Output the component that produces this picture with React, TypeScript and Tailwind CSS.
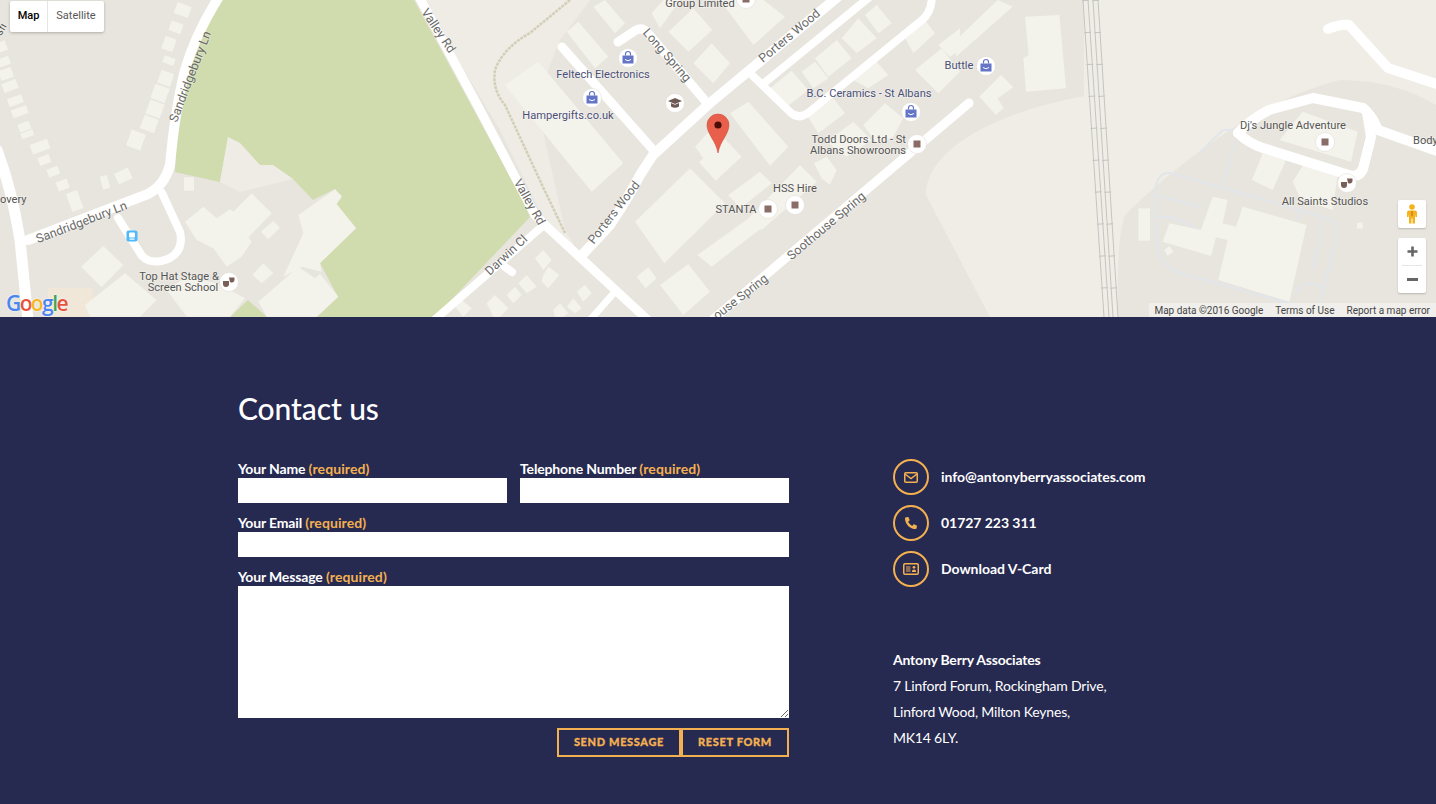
import { FaPhoneAlt } from "react-icons/fa";

// Footprints below were read off 3x crops, so they stay in crop coordinates.
// Each group gets shifted by its crop's x origin when drawn.
const blocksLeft = [
  [555,665,610,620,650,655,690,628,700,635,755,580,815,640,745,712,755,725,725,770,680,800,640,745,590,720],
  [895,645,1005,568,1025,590,1010,612,1068,685,960,790,965,815,905,800,850,830,910,700],
  [775,905,895,800,945,835,960,822,1015,890,950,950,800,950],
  [243,800,310,738,370,795,305,862],
  [255,915,375,820,470,900,420,950,270,950],
  [500,870,560,830,650,850,735,895,690,950,560,950],
  [783,695,820,663,840,683,805,718],
  [757,825,790,790,820,820,785,850],
  [1365,920,1385,900,1415,925,1390,950],
];

const blocksMid = [
  [340,20,375,0,435,70,405,100],
  [260,95,295,65,385,170,345,205],
  [75,255,175,185,430,490,335,575],
  [515,40,550,0,600,0,540,85],
  [565,95,640,25,697,90,625,155],
  [640,190,695,130,750,190,700,250],
  [720,0,850,0,915,50,820,135],
  [870,265,935,212,985,270,915,325],
  [965,215,1005,185,1045,235,1000,265],
  [1005,175,1070,120,1115,175,1045,230],
  [1085,115,1135,55,1190,115,1130,160],
  [1155,45,1190,15,1235,70,1195,100],
  [1265,95,1335,60,1365,100,1300,160],
  [1120,240,1185,180,1225,225,1165,265],
  [1305,210,1385,145,1440,215,1375,280],
  [980,345,1060,295,1095,340,1015,400],
  [1150,375,1215,310,1270,355,1240,410,1190,430],
  [1375,135,1440,85,1440,150,1410,170],
  [645,440,700,380,785,470,707,542,657,487,670,475],
  [750,340,805,305,925,440,870,497],
  [1040,425,1120,365,1175,420,1100,470],
  [465,665,630,505,735,610,553,790],
  [652,765,820,645,850,680,695,800],
  [745,585,840,515,875,550,780,625],
  [800,660,960,495,1010,545,845,690],
  [1002,490,1040,470,1070,510,1050,555,1025,535],
  [540,855,625,792,690,875,610,945],
  [470,830,505,802,530,835,497,865],
  [165,775,190,750,215,780,190,810],
  [190,825,205,800,238,825,205,865,185,845],
  [115,850,140,825,170,860,140,880],
  [80,885,105,860,125,885,100,910],
  [290,875,315,855,335,880,310,905],
  [260,920,280,895,305,925,285,940],
  [220,930,240,910,265,940,250,950,225,950],
  [20,910,45,885,85,925,60,950,40,950],
];

const blocksRight = [
  [0,120,125,0,170,20,0,170],
  [207,50,310,45,330,265,210,275,202,175,218,165],
  [70,290,135,225,172,262,125,295,143,325,120,345],
  [1040,335,1205,395,1185,485,970,420],
  [888,540,920,460,990,480,950,570],
  [1010,545,1045,490,1145,525,1130,630,1035,600],
  [620,725,640,670,735,690,770,590,815,600,800,670,840,680,860,620,1052,675,1000,905,787,840,815,720,780,712,765,768],
  [547,625,582,625,582,722,547,722],
  [625,750,640,738,652,755,635,767],
  [1203,668,1220,668,1220,686,1203,686],
];

// cx, cy, w, h, angle (crop coordinates again)
const houses = [
  [548,30,45,35,20],[528,82,38,30,20],[507,132,35,40,20],[507,182,35,22,20],[497,235,40,40,20],
  [480,280,45,45,20],[465,327,45,45,20],[448,372,45,42,20],[408,420,45,50,20],
  [5,140,30,30,-20],[12,185,35,25,-20],[18,222,40,30,-20],[30,258,45,28,-20],[46,302,45,25,-20],
  [59,335,48,25,-20],[73,380,35,25,-20],[82,403,38,18,-20],[120,440,55,30,-20],[133,480,35,25,-20],
  [160,515,35,25,-20],[188,555,35,28,-20],[224,603,35,58,-20],[315,547,22,40,-15],[370,528,45,35,-25],
  [567,552,30,40,0],
];

const bags = [[628,58],[592,98],[911,112],[986,66]];
const squares = [[768,209],[795,205],[917,144],[1325,142],[746,-1]];
const masks = [[229,282],[1347,183]];

const toPoints = (ox: number, pts: number[]) => {
  const out: string[] = [];
  for (let i = 0; i < pts.length; i += 2) out.push(`${ox + pts[i] / 3},${pts[i + 1] / 3}`);
  return out.join(" ");
};

function Label({ x, y, text, rotate, blue, road, anchor = "middle" }: { x: number; y: number; text: string; rotate?: number; blue?: boolean; road?: boolean; anchor?: "middle" | "start" | "end" }) {
  return (
    <text
      x={x}
      y={y}
      textAnchor={anchor}
      transform={rotate ? `rotate(${rotate} ${x} ${y})` : undefined}
      fill={blue ? "#4b5078" : road ? "#6a6a68" : "#555553"}
      stroke="#ffffff"
      strokeOpacity="0.35"
      strokeWidth="1.5"
      paintOrder="stroke"
      fontSize={road ? 12.4 : 11.1}
      className="font-['Roboto',sans-serif]"
    >
      {text}
    </text>
  );
}

function Dot({ x, y }: { x: number; y: number }) {
  return <circle cx={x} cy={y} r="9.5" fill="#fff" stroke="#dcd9d2" strokeWidth="0.5" />;
}

function MapArea() {
  return (
    <svg width="1436" height="317" viewBox="0 0 1436 317" className="block">
      <rect width="1436" height="317" fill="#e8e5de" />
      {/* lighter open land */}
      <polygon points="422,0 590,0 560,40 536,100 565,230 578,252 545,222 500,130" fill="#efece5" />
      <path d="M1084,0 L1084,96 Q1000,112 956,145 Q925,170 926,195 Q960,260 990,317 L1118,317 Q1116,240 1125,215 Q1170,170 1230,130 Q1290,92 1340,80 Q1395,80 1436,105 L1436,0 Z" fill="#f0ede6" />
      <polygon points="956,0 1084,0 1084,96 1000,112 956,145" fill="#e8e5de" />
      <polygon points="48,288 93,288 93,317 48,317" fill="#f1e7d8" />

      {/* park */}
      <polygon points="222,0 414,0 520,195 530,217 435,317 317,317 338,297 320,263 356,228 336,204 342,196 335,189 313,200 293,179 273,165 260,165 228,137 220,182 175,172 178,113 190,50" fill="#d0dcae" />
      <polygon points="230,317 248,300 267,317" fill="#d0dcae" />
      <polygon points="220,182 228,137 240,143 260,165 273,165 293,179 240,192" fill="#efece5" />

      {/* buildings */}
      <g fill="#f3f2eb">
        {blocksLeft.map((b, i) => <polygon key={i} points={toPoints(0, b)} />)}
        {blocksMid.map((b, i) => <polygon key={i} points={toPoints(480, b)} />)}
        {blocksRight.map((b, i) => <polygon key={i} points={toPoints(956, b)} />)}
        {houses.map(([cx, cy, w, h, a], i) => (
          <rect key={i} x={cx / 3 - w / 6} y={cy / 3 - h / 6} width={w / 3} height={h / 3} transform={`rotate(${a} ${cx / 3} ${cy / 3})`} />
        ))}
      </g>

      {/* footpath */}
      <path d="M570,0 L530,33 Q503,48 495,70 Q492,90 505,105 L543,187 L565,233" fill="none" stroke="#d2cfb8" strokeWidth="2.5" strokeDasharray="3 1" />

      {/* railway */}
      <g stroke="#c4c4c2" fill="none">
        <path d="M1083,0 L1104,317 M1088,0 L1109,317 M1093,0 L1113,317 M1098,0 L1118,317" strokeWidth="1" />
        <path d="M1085.5,0 L1106.5,317 M1095.5,0 L1115.5,317" strokeWidth="7" strokeDasharray="1 31" />
      </g>

      {/* thin estate roads */}
      <g fill="none" stroke="#e2e5ea" strokeWidth="2.2" strokeLinecap="round" strokeLinejoin="round">
        <path d="M1290,207 L1170,173 Q1158,172 1155,190 L1157,245 Q1158,262 1176,272 L1289,303" />
        <path d="M1290,207 L1323,217 Q1338,220 1337,235 L1318,312" />
        <path d="M1201,152 Q1212,140 1223,130 L1234,130" />
        <path d="M1236,140 L1223,185" />
        <path d="M1156,195 L1201,207" />
        <path d="M1156,217 Q1165,216 1173,218 L1194,227" />
        <path d="M1321,220 Q1322,235 1319,243 L1313,268" />
        <path d="M1296,292 Q1303,283 1309,283 L1323,287" />
        <path d="M1299,212 L1296,221" />
      </g>

      {/* roads */}
      <g fill="none" stroke="#fff" strokeLinecap="round" strokeLinejoin="round">
        <path strokeWidth="10" d="M220,-5 Q195,35 185,70 Q175,110 170,165 Q165,185 148,194 L28,240" />
        <path strokeWidth="8" d="M162,193 L180,232 Q184,250 170,258 Q152,266 142,256 L118,218" />
        <path strokeWidth="11" d="M-3,150 Q12,190 20,240 L28,320" />
        <path strokeWidth="9" d="M418,-5 L480,110 L535,215 L545,225 L650,322" />
        <path strokeWidth="8" d="M545,224 L432,322" />
        <path strokeWidth="10" d="M583,254 L610,225 Q630,195 640,175 L653,155 L710,103 L840,-5" />
        <path strokeWidth="8" d="M753,76 L790,112 Q798,120 808,113 L922,20 Q932,12 932,-5" />
        <path strokeWidth="8" d="M763,84 L872,-5" />
        <path strokeWidth="9" d="M562,47 L655,152" />
        <path strokeWidth="9" d="M618,42 L636,30 Q642,27 647,32 L707,103" />
        <path strokeWidth="9" d="M710,322 L969,103" />
        <path strokeWidth="7" d="M613,294 L590,320" />
        <path strokeWidth="8" d="M505,267 L512,272" />
        <path strokeWidth="10" d="M1238,133 Q1250,120 1269,110 L1313,98 L1363,108 Q1372,115 1378,130 L1440,152" />
        <path strokeWidth="10" d="M1238,133 Q1248,143 1263,148 L1352,176 Q1362,176 1364,165 L1371,137 L1367,112" />
        <path strokeWidth="10" d="M1328,29 Q1340,24 1349,25 L1388,68 L1440,85" />
      </g>

      {/* labels */}
      <Label x={700} y={7} text="Group Limited" />
      <Label x={603} y={78} text="Feltech Electronics" blue />
      <Label x={568} y={119} text="Hampergifts.co.uk" blue />
      <Label x={664} y={58} text="Long Spring" road rotate={49} />
      <Label x={792} y={39} text="Porters Wood" road rotate={-40} />
      <Label x={617} y={215} text="Porters Wood" road rotate={-52} />
      <Label x={435} y={33} text="Valley Rd" road rotate={56} />
      <Label x={526} y={204} text="Valley Rd" road rotate={60} />
      <Label x={509} y={258} text="Darwin Cl" road rotate={-43} />
      <Label x={194} y={78} text="Sandridgebury Ln" road rotate={-69} />
      <Label x={83} y={226} text="Sandridgebury Ln" road rotate={-21} />
      <Label x={0} y={203} text="overy" anchor="start" />
      <Label x={4} y={31} text="sfi" rotate={-60} />
      <Label x={179} y={280} text="Top Hat Stage &" />
      <Label x={183} y={291} text="Screen School" />
      <Label x={869} y={97} text="B.C. Ceramics - St Albans" blue />
      <Label x={959} y={69} text="Buttle" blue />
      <Label x={906} y={143} text="Todd Doors Ltd - St" anchor="end" />
      <Label x={906} y={154} text="Albans Showrooms" anchor="end" />
      <Label x={795} y={192} text="HSS Hire" />
      <Label x={736} y={213} text="STANTA" />
      <Label x={829} y={229} text="Soothouse Spring" road rotate={-40} />
      <Label x={743} y={300} text="ouse Spring" road rotate={-38} />
      <Label x={1293} y={129} text="Dj's Jungle Adventure" />
      <Label x={1325} y={205} text="All Saints Studios" />
      <Label x={1413} y={144} text="Body" anchor="start" />

      {/* POI markers */}
      {bags.map(([x, y]) => (
        <g key={`b${x}`}>
          <Dot x={x} y={y} />
          <path d={`M${x - 5.5},${y - 2.5} h11 v8 h-11 Z`} fill="#6475c7" />
          <path d={`M${x - 2.5},${y - 2.5} v-1.5 a2.5,2.5 0 0 1 5,0 v1.5`} fill="none" stroke="#6475c7" strokeWidth="1.2" />
          <path d={`M${x - 3},${y + 1.5} q3,2.5 6,0`} fill="none" stroke="#fff" strokeWidth="1" />
        </g>
      ))}
      {squares.map(([x, y]) => (
        <g key={`s${x}`}>
          <Dot x={x} y={y} />
          <rect x={x - 3.5} y={y - 3.5} width="7" height="7" fill="#8a6d66" />
        </g>
      ))}
      {masks.map(([x, y]) => (
        <g key={`m${x}`}>
          <Dot x={x} y={y} />
          <path d={`M${x - 6},${y - 1} h6 v3 a3,3 0 0 1 -6,0 Z`} fill="#7a5f58" />
          <path d={`M${x},${y - 4.5} h5.5 v2.5 a2.8,2.8 0 0 1 -4.5,2 Z`} fill="#7a5f58" />
        </g>
      ))}
      <Dot x={675} y={103} />
      <path d="M668,101 L675,98 L682,101 L675,104 Z" fill="#6d5a55" />
      <path d="M671,103 v3.5 q4,2.5 8,0 v-3.5 l-4,1.7 Z" fill="#6d5a55" />
      <rect x="126.5" y="230.5" width="11" height="11" rx="2" fill="#4db8fb" />
      <rect x="129" y="232.5" width="6" height="5" rx="1" fill="#fff" />
      <rect x="129.5" y="238.5" width="5" height="1.2" fill="#fff" />

      {/* marker pin */}
      <path d="M718,153 C716,141 707,134 707,125 A11,11 0 0 1 729,125 C729,134 720,141 718,153 Z" fill="#e8604c" stroke="#c8412f" strokeWidth="0.5" />
      <circle cx="718" cy="125" r="3.6" fill="#4a0d08" />
    </svg>
  );
}

function Field({ label, className, tall }: { label: string; className?: string; tall?: boolean }) {
  return (
    <div className={className}>
      <div className="h-[18px] text-[14px] leading-[18px] font-bold tracking-[-0.15px] text-white">
        {label} <span className="font-bold tracking-[0.1px] text-[#f3b050]">(required)</span>
      </div>
      <div className={tall ? "h-[132px] bg-white relative" : "h-[25px] bg-white"}>
        {tall && (
          <svg width="10" height="10" viewBox="0 0 10 10" className="absolute right-0 bottom-0">
            <path d="M9,2 L2,9 M9,6 L6,9" stroke="#666" strokeWidth="1" />
          </svg>
        )}
      </div>
    </div>
  );
}

function ContactRow({ icon, text }: { icon: React.ReactNode; text: string }) {
  return (
    <div className="flex items-center gap-3 h-[36px]">
      <div className="w-9 h-9 rounded-full border-2 border-[#f3b050] flex items-center justify-center text-[#f3b050]">
        {icon}
      </div>
      <span className="pb-[1px] text-[14px] font-bold tracking-[-0.04px] text-white">{text}</span>
    </div>
  );
}

function MailIcon() {
  return (
    <svg width="14" height="11" viewBox="0 0 14 11" fill="none" stroke="#f3b050" strokeWidth="1.5">
      <rect x="0.75" y="0.75" width="12.5" height="9.5" rx="1" />
      <path d="M1,2 L7,6.5 L13,2" />
    </svg>
  );
}

function CardIcon() {
  return (
    <svg width="16" height="12" viewBox="0 0 16 12" fill="none">
      <rect x="0.75" y="0.75" width="14.5" height="10.5" rx="1.2" stroke="#f3b050" strokeWidth="1.5" />
      <path d="M3,4 h4.5 M3,6 h4.5 M3,8 h4.5" stroke="#f3b050" strokeWidth="1.2" />
      <circle cx="11" cy="4.3" r="1.4" fill="#f3b050" />
      <path d="M9,9 v-1 q0,-1.5 2,-1.5 q2,0 2,1.5 v1 Z" fill="#f3b050" />
    </svg>
  );
}

export default function App() {
  return (
    <div className="w-[1436px] h-[804px] overflow-hidden font-['Lato',sans-serif]">
      <div className="relative h-[317px] overflow-hidden">
        <MapArea />

        <div className="absolute left-[10px] top-[1px] flex h-[31px] w-[94px] rounded-[2px] bg-white text-[11px] shadow-[0_1px_3px_rgba(0,0,0,0.25)] font-['Roboto',sans-serif]">
          <div className="flex w-[38px] items-center justify-center border-r border-[#e6e6e6] font-medium text-black">Map</div>
          <div className="flex flex-1 items-center justify-center text-[#565656]">Satellite</div>
        </div>

        <div className="absolute left-[6px] top-[290px] text-[21px] leading-[26px] font-semibold font-['Open_Sans',sans-serif] tracking-[-1.6px] [text-shadow:0_0_2px_#fff]">
          <span className="text-[#4a85f0]">G</span>
          <span className="text-[#e5533d]">o</span>
          <span className="text-[#f5b81f]">o</span>
          <span className="text-[#4a85f0]">g</span>
          <span className="text-[#3aa757]">l</span>
          <span className="text-[#e5533d]">e</span>
        </div>

        <div className="absolute left-[1398px] top-[200px] flex h-[28px] w-[28px] items-center justify-center rounded-[2px] bg-white shadow-[0_1px_2px_rgba(0,0,0,0.2)]">
          <svg width="12" height="20" viewBox="0 0 12 20">
            <circle cx="6" cy="3" r="2.8" fill="#f2b41d" />
            <path d="M2.5,6.5 h7 q1.5,0.5 1.5,2 v4.5 h-1.5 l-0.5,-3 v9.5 h-2.5 v-5 h-1 v5 h-2.5 v-9.5 l-0.5,3 h-1.5 v-4.5 q0,-1.5 1.5,-2 Z" fill="#f2b41d" />
            <path d="M6,7 v5" stroke="#d9572b" strokeWidth="1" />
          </svg>
        </div>

        <div className="absolute left-[1398px] top-[238px] flex h-[55px] w-[28px] flex-col items-center rounded-[2px] bg-white shadow-[0_1px_2px_rgba(0,0,0,0.2)]">
          <div className="flex h-[27px] w-full items-center justify-center">
            <svg width="11" height="11" viewBox="0 0 11 11"><path d="M4.2,0.5 h2.6 v3.7 h3.7 v2.6 h-3.7 v3.7 h-2.6 v-3.7 h-3.7 v-2.6 h3.7 Z" fill="#666" /></svg>
          </div>
          <div className="h-px w-[20px] bg-[#e6e6e6]" />
          <div className="flex flex-1 w-full items-center justify-center">
            <svg width="11" height="3" viewBox="0 0 11 3"><rect width="11" height="3" fill="#666" /></svg>
          </div>
        </div>

        <div className="absolute right-0 bottom-0 flex h-[14px] items-center gap-[12px] bg-[rgba(245,245,245,0.6)] pr-[6px] pl-[5px] text-[10px] text-[#444] font-['Roboto',sans-serif]">
          <span>Map data ©2016 Google</span>
          <span>Terms of Use</span>
          <span>Report a map error</span>
        </div>
      </div>

      <div className="h-[487px] bg-[#262950] pl-[238px]">
        <h2 className="pt-[70px] text-[30px] leading-[42px] font-medium tracking-[-0.1px] text-white">Contact us</h2>
        <div className="mt-[31px] flex">
          <div className="w-[551px]">
            <div className="flex gap-[13px]">
              <Field label="Your Name" className="flex-1" />
              <Field label="Telephone Number" className="flex-1" />
            </div>
            <Field label="Your Email" className="mt-[11px]" />
            <Field label="Your Message" className="mt-[11px]" tall />
            <div className="mt-[10px] flex justify-end text-[11px] font-black text-[#f3b050] [-webkit-text-stroke:0.3px_#f3b050]">
              <button className="h-[29px] w-[124px] border-2 border-[#f3b050] uppercase tracking-[0.65px]">Send Message</button>
              <button className="h-[29px] w-[108px] border-2 border-[#f3b050] uppercase tracking-[0.65px]">Reset Form</button>
            </div>
          </div>
          <div className="ml-[104px] -mt-[1px]">
            <div className="flex flex-col gap-[10px]">
              <ContactRow icon={<MailIcon />} text="info@antonyberryassociates.com" />
              <ContactRow icon={<FaPhoneAlt className="text-[12px]" />} text="01727 223 311" />
              <ContactRow icon={<CardIcon />} text="Download V-Card" />
            </div>
            <div className="mt-[60px] text-[14px] leading-[26px] tracking-[-0.2px] text-white">
              <div className="font-bold">Antony Berry Associates</div>
              <div>7 Linford Forum, Rockingham Drive,</div>
              <div>Linford Wood, Milton Keynes,</div>
              <div>MK14 6LY.</div>
            </div>
          </div>
        </div>
      </div>
    </div>
  );
}
